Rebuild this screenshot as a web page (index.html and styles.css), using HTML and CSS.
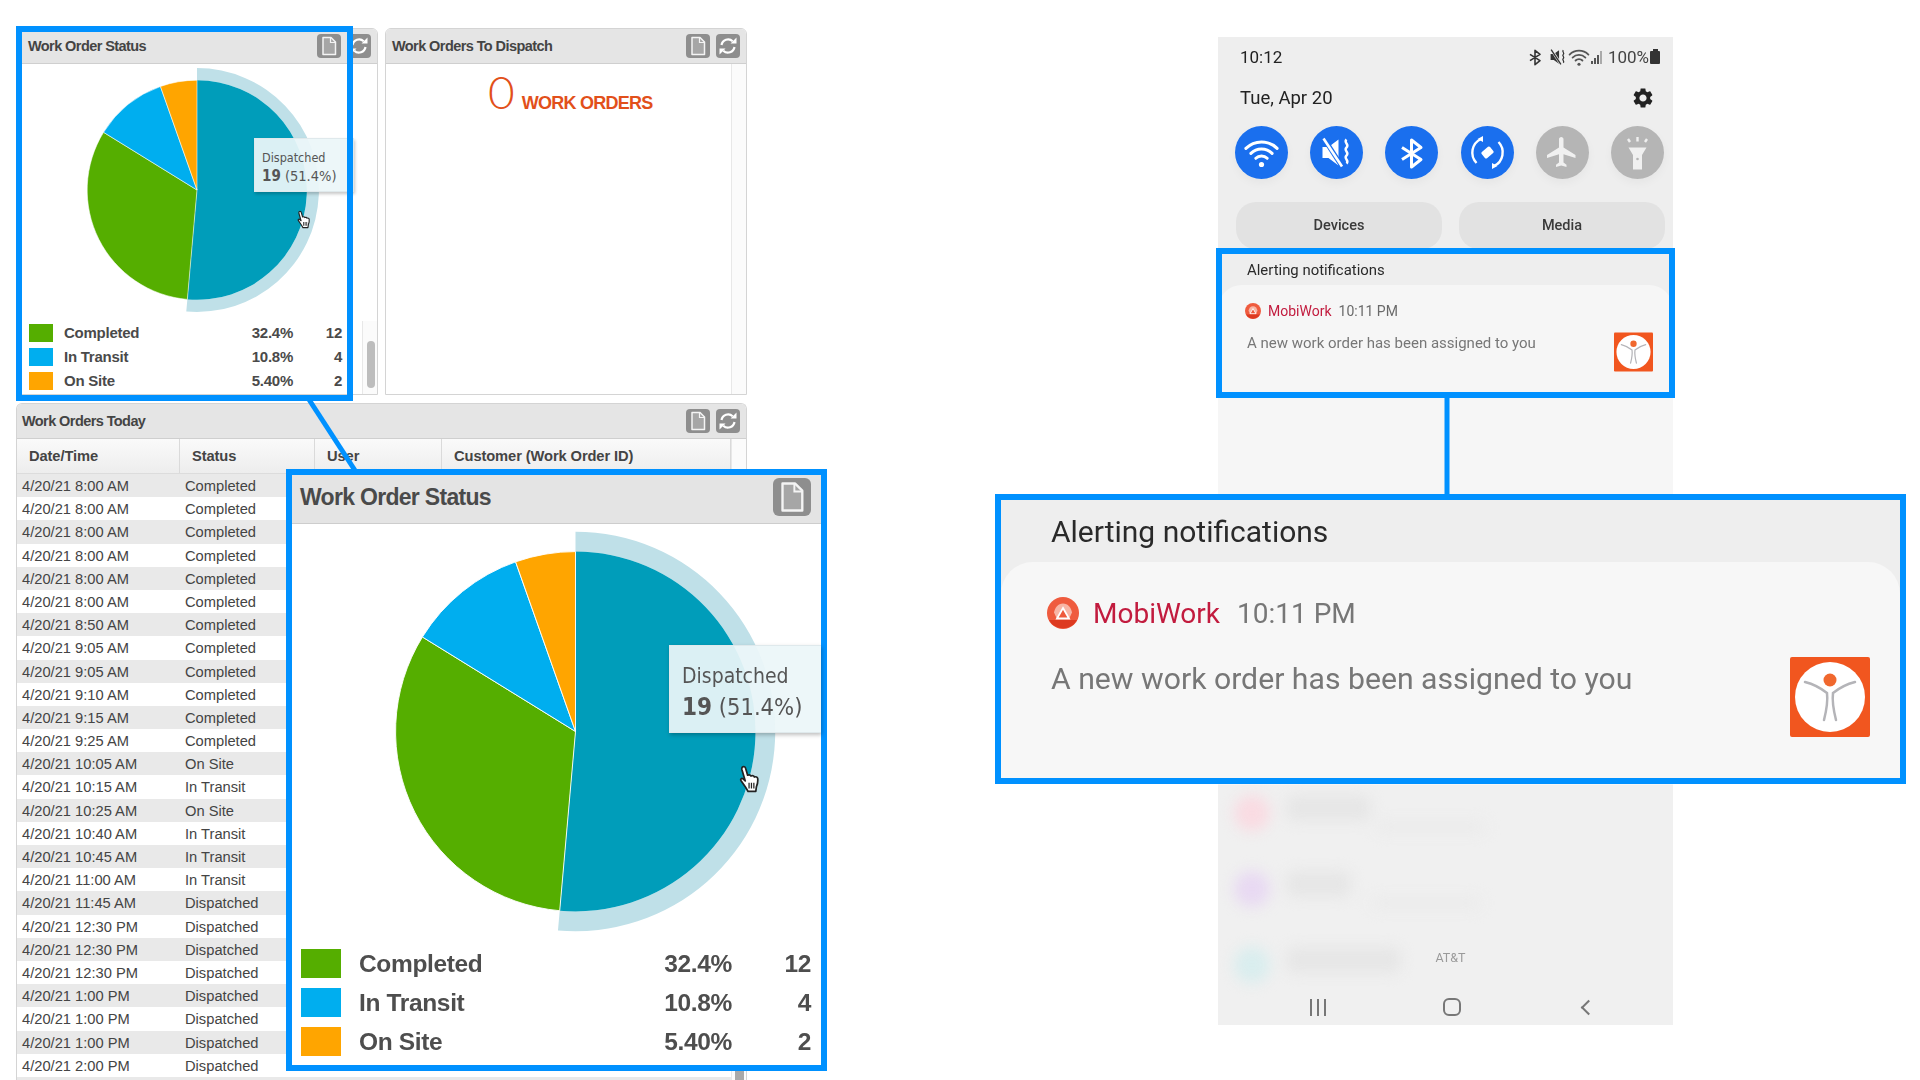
FILE: index.html
```html
<!DOCTYPE html>
<html lang="en">
<head>
<meta charset="utf-8">
<title>Work Order Status and MobiWork notification</title>
<link rel="stylesheet" href="styles.css">
</head>
<body>
<svg class="defs" aria-hidden="true">
  <symbol id="pie" viewBox="-112 -112 224 224">
    <path fill="#bfe0e8" d="M0 -111A111 111 0 1 1 -9.75 110.57L-8.78 99.61A100 100 0 1 0 0 -100Z"/>
    <path fill="#009dba" d="M0 0L0 -100A100 100 0 1 1 -8.78 99.61Z"/>
    <path fill="#55ae00" stroke="#fff" stroke-width=".5" d="M0 0L-8.78 99.61A100 100 0 0 1 -85.09 -52.53Z"/>
    <path fill="#00aeef" stroke="#fff" stroke-width=".5" d="M0 0L-85.09 -52.53A100 100 0 0 1 -33.29 -94.3Z"/>
    <path fill="#ffa500" stroke="#fff" stroke-width=".5" d="M0 0L-33.29 -94.3A100 100 0 0 1 0 -100Z"/>
  </symbol>
  <symbol id="doc" viewBox="0 0 24 24">
    <path fill="#a6a6a6" stroke="#f4f4f4" stroke-width="1.5" stroke-linejoin="round" d="M6 3.5h8l4.500 4.500v12.500h-12.500z"/>
    <path fill="none" stroke="#f4f4f4" stroke-width="1.200" d="M13.500 3.500v5h5"/>
  </symbol>
  <symbol id="refresh" viewBox="0 0 24 24">
    <g fill="none" stroke="#fff" stroke-width="2.200">
      <path d="M5.500 11a6.700 6.700 0 0 1 11.200-3.800"/>
      <path d="M18.500 13a6.700 6.700 0 0 1-11.200 3.800"/>
    </g>
    <path fill="#fff" d="M14.500 9.500h6v-6zM9.500 14.500h-6v6z"/>
  </symbol>
  <symbol id="hand" viewBox="0 0 24 30">
    <path fill="#fff" stroke="#222" stroke-width="1.800" stroke-linejoin="round" d="M3.500 2.500c1.500-1 3-.2 3.400 1.300L9 11c2-.7 3-.3 3.500.9 1.500-.7 3-.3 3.500 1 1.600-.6 3.200 0 3.500 1.500.4 3-.2 6-1.300 8.600L17.500 28H9.500L6.500 23 2 16.500c-.7-1.300.7-2.700 2-1.800L6.500 17 3 5c-.2-1 0-2 .5-2.500z"/>
    <path fill="none" stroke="#222" stroke-width="1.300" d="M10.500 19v6M13 19v6M15.500 19v6"/>
  </symbol>
  <symbol id="gear" viewBox="0 0 24 24">
    <path fill="currentColor" d="M19.140 12.940c.04-.3.06-.61.06-.94 0-.32-.02-.64-.07-.94l2.030-1.580c.18-.14.23-.41.12-.61l-1.920-3.320c-.12-.22-.37-.29-.59-.22l-2.390.96c-.5-.38-1.030-.7-1.620-.94l-.36-2.540c-.04-.24-.24-.41-.48-.41h-3.840c-.24 0-.43.17-.47.41l-.36 2.540c-.59.24-1.130.57-1.620.94l-2.390-.96c-.22-.08-.47 0-.59.22L2.740 8.870c-.12.21-.08.47.12.61l2.030 1.580c-.05.3-.09.63-.09.94s.02.64.07.94l-2.030 1.580c-.18.14-.23.41-.12.61l1.920 3.320c.12.22.37.29.59.22l2.390-.96c.5.38 1.030.7 1.620.94l.36 2.540c.05.24.24.41.48.41h3.840c.24 0 .44-.17.47-.41l.36-2.540c.59-.24 1.130-.56 1.620-.94l2.390.96c.22.08.47 0 .59-.22l1.920-3.320c.12-.22.07-.47-.12-.61l-2.010-1.580zM12 15.600c-1.980 0-3.600-1.620-3.600-3.600s1.620-3.600 3.600-3.600 3.600 1.620 3.600 3.600-1.620 3.600-3.600 3.600z"/>
  </symbol>
  <symbol id="wifi" viewBox="0 0 53 53">
    <g fill="none" stroke="currentColor" stroke-width="3" stroke-linecap="round">
      <path d="M10.900 22.400a22 22 0 0 1 31.200 0"/>
      <path d="M15.900 27.400a15 15 0 0 1 21.200 0"/>
      <path d="M20.800 32.300a8 8 0 0 1 11.400 0"/>
    </g>
    <circle cx="26.500" cy="38.500" r="2.600" fill="currentColor"/>
  </symbol>
  <symbol id="mute" viewBox="0 0 53 53">
    <path fill="currentColor" d="M12.500 21h6l10-7.500v26l-10-7.500h-6z"/>
    <path class="mute-gap" fill="none" stroke-width="5" d="M12 9.500l20 31"/>
    <path fill="none" stroke="currentColor" stroke-width="2.600" d="M13.500 12.500l18.500 28"/>
    <path fill="none" stroke="currentColor" stroke-width="2.400" d="M36.500 13.500c-3.500 3 3.500 5 0 8s3.500 5 0 8 3.500 5 0 8"/>
  </symbol>
  <symbol id="bt" viewBox="0 0 53 53">
    <path fill="none" stroke="currentColor" stroke-width="3" stroke-linejoin="round" d="M17 21.500L36 33.500 26.500 41V14L36 21.500 17 33.500"/>
  </symbol>
  <symbol id="rotate" viewBox="0 0 53 53">
    <g fill="none" stroke="#fff" stroke-width="2.400">
      <path d="M20 13a15 15 0 0 0-4.500 24"/>
      <path d="M33 40a15 15 0 0 0 4.500-24"/>
    </g>
    <path fill="#fff" d="M16.500 13l5.500-3v6zM36.500 40l-5.500 3v-6z"/>
    <rect x="21" y="22.500" width="11" height="8" rx="1.500" fill="#fff" transform="rotate(-40 26.500 26.500)"/>
  </symbol>
  <symbol id="plane" viewBox="0 0 24 24">
    <path fill="currentColor" d="M21 16v-2l-8-5V3.500c0-.83-.67-1.500-1.500-1.500S10 2.670 10 3.500V9l-8 5v2l8-2.500V19l-2 1.500V22l3.500-1 3.500 1v-1.500L13 19v-5.500l8 2.500z"/>
  </symbol>
  <symbol id="torch" viewBox="0 0 53 53">
    <path fill="currentColor" d="M17.500 21.500h18l-4.500 7.500v14.500h-9V29z"/>
    <circle cx="26.500" cy="33" r="1.300" fill="#b5b5b5"/>
    <path fill="none" stroke="currentColor" stroke-width="2.400" d="M26.500 11v4.500M17 13l2 3M36 13l-2 3"/>
  </symbol>
  <symbol id="mobi" viewBox="0 0 32 32">
    <circle cx="16" cy="16" r="16" fill="#ef5b3e"/>
    <path fill="#fbd3c8" d="M16 6.500c5 0 8 4 9 9l-3 6.500H10l-3-6.500c1-5 4-9 9-9z" opacity=".75"/>
    <path fill="#ee5a3c" stroke="#fff" stroke-width="1.800" d="M16 11l6 10.500H10z"/>
    <path fill="#dd3a20" d="M2 23h28a16 16 0 0 1-28 0z"/>
  </symbol>
  <symbol id="thumb" viewBox="0 0 80 80">
    <rect width="80" height="80" rx="2" fill="#f1561f"/>
    <circle cx="40" cy="40" r="35" fill="#fff"/>
    <circle cx="40" cy="23" r="6.500" fill="#f0682e"/>
    <path fill="none" stroke="#b4b4b8" stroke-width="2.500" stroke-linecap="round" d="M15 25c8 2 17 7 22 11 1 8-1 19-3 27M65 25c-8 2-17 7-22 11-1 8 1 19 3 27"/>
  </symbol>
</svg>

<main class="page">
  <section class="dash">
    <div class="top-row">
      <article class="panel panel-top">
        <header class="panel-head">
          <h2 class="panel-title title-status">Work Order Status</h2>
          <span class="tool"><svg class="tool-icon"><use href="#doc"/></svg></span>
          <span class="tool"><svg class="tool-icon"><use href="#refresh"/></svg></span>
        </header>
        <div class="chart">
          <svg class="pie"><use href="#pie"/></svg>
          <svg class="hand"><use href="#hand"/></svg>
          <div class="tip">
            <div>Dispatched</div>
            <div class="tip-value"><b>19</b> (51.4%)</div>
          </div>
        </div>
        <ul class="legend">
          <li class="leg-row"><i class="swatch sw-green"></i><span class="leg-name">Completed</span><span>32.4%</span><span class="leg-count">12</span></li>
          <li class="leg-row"><i class="swatch sw-blue"></i><span class="leg-name">In Transit</span><span>10.8%</span><span class="leg-count">4</span></li>
          <li class="leg-row"><i class="swatch sw-orange"></i><span class="leg-name">On Site</span><span>5.40%</span><span class="leg-count">2</span></li>
        </ul>
        <div class="mini-scroll"><i class="mini-thumb"></i></div>
      </article>

      <article class="panel panel-top">
        <header class="panel-head">
          <h2 class="panel-title title-dispatch">Work Orders To Dispatch</h2>
          <span class="tool"><svg class="tool-icon"><use href="#doc"/></svg></span>
          <span class="tool"><svg class="tool-icon"><use href="#refresh"/></svg></span>
        </header>
        <div class="dispatch-body">
          <div class="dispatch-count"><span class="zero">0</span><span class="wo">WORK ORDERS</span></div>
          <div class="track"></div>
        </div>
      </article>
    </div>

    <article class="panel panel-table">
      <header class="panel-head">
        <h2 class="panel-title title-today">Work Orders Today</h2>
        <span class="tool"><svg class="tool-icon"><use href="#doc"/></svg></span>
        <span class="tool"><svg class="tool-icon"><use href="#refresh"/></svg></span>
      </header>
      <div class="table-wrap">
        <div class="table">
          <div class="thead">
            <span>Date/Time</span><span>Status</span><span>User</span><span>Customer (Work Order ID)</span>
          </div>
          <div class="tr"><span>4/20/21 8:00 AM</span><span>Completed</span></div>
          <div class="tr"><span>4/20/21 8:00 AM</span><span>Completed</span></div>
          <div class="tr"><span>4/20/21 8:00 AM</span><span>Completed</span></div>
          <div class="tr"><span>4/20/21 8:00 AM</span><span>Completed</span></div>
          <div class="tr"><span>4/20/21 8:00 AM</span><span>Completed</span></div>
          <div class="tr"><span>4/20/21 8:00 AM</span><span>Completed</span></div>
          <div class="tr"><span>4/20/21 8:50 AM</span><span>Completed</span></div>
          <div class="tr"><span>4/20/21 9:05 AM</span><span>Completed</span></div>
          <div class="tr"><span>4/20/21 9:05 AM</span><span>Completed</span></div>
          <div class="tr"><span>4/20/21 9:10 AM</span><span>Completed</span></div>
          <div class="tr"><span>4/20/21 9:15 AM</span><span>Completed</span></div>
          <div class="tr"><span>4/20/21 9:25 AM</span><span>Completed</span></div>
          <div class="tr"><span>4/20/21 10:05 AM</span><span>On Site</span></div>
          <div class="tr"><span>4/20/21 10:15 AM</span><span>In Transit</span></div>
          <div class="tr"><span>4/20/21 10:25 AM</span><span>On Site</span></div>
          <div class="tr"><span>4/20/21 10:40 AM</span><span>In Transit</span></div>
          <div class="tr"><span>4/20/21 10:45 AM</span><span>In Transit</span></div>
          <div class="tr"><span>4/20/21 11:00 AM</span><span>In Transit</span></div>
          <div class="tr"><span>4/20/21 11:45 AM</span><span>Dispatched</span></div>
          <div class="tr"><span>4/20/21 12:30 PM</span><span>Dispatched</span></div>
          <div class="tr"><span>4/20/21 12:30 PM</span><span>Dispatched</span></div>
          <div class="tr"><span>4/20/21 12:30 PM</span><span>Dispatched</span></div>
          <div class="tr"><span>4/20/21 1:00 PM</span><span>Dispatched</span></div>
          <div class="tr"><span>4/20/21 1:00 PM</span><span>Dispatched</span></div>
          <div class="tr"><span>4/20/21 1:00 PM</span><span>Dispatched</span></div>
          <div class="tr"><span>4/20/21 2:00 PM</span><span>Dispatched</span></div>
          <div class="tr"></div>
        </div>
        <div class="track track-table"><i class="track-thumb"></i></div>
      </div>
    </article>
  </section>

  <section class="phone">
    <div class="status soft">
      <span class="clock">10:12</span>
      <span class="status-right">
        <svg class="st-bt"><use href="#bt"/></svg>
        <svg class="st-mute"><use href="#mute"/></svg>
        <svg class="st-wifi"><use href="#wifi"/></svg>
        <span class="st-bars"><i class="bar b1"></i><i class="bar b2"></i><i class="bar b3"></i><i class="bar b4"></i></span>
        <span class="pct">100%</span>
        <i class="battery"></i>
      </span>
    </div>
    <div class="dateline soft">
      <span class="date">Tue, Apr 20</span>
      <svg class="gear"><use href="#gear"/></svg>
    </div>
    <div class="toggles soft">
      <span class="tog on"><svg class="tog-icon"><use href="#wifi"/></svg></span>
      <span class="tog on"><svg class="tog-icon"><use href="#mute"/></svg></span>
      <span class="tog on"><svg class="tog-icon"><use href="#bt"/></svg></span>
      <span class="tog on"><svg class="tog-icon"><use href="#rotate"/></svg></span>
      <span class="tog off"><svg class="plane"><use href="#plane"/></svg></span>
      <span class="tog off"><svg class="tog-icon"><use href="#torch"/></svg></span>
    </div>
    <div class="pills soft">
      <span class="pill">Devices</span>
      <span class="pill">Media</span>
    </div>
    <div class="alert-head soft">Alerting notifications</div>
    <div class="notif soft">
      <div class="notif-main">
        <div class="notif-app">
          <svg class="mobi"><use href="#mobi"/></svg>
          <span class="app-name">MobiWork</span>
          <span class="app-time">10:11 PM</span>
        </div>
        <p class="notif-body">A new work order has been assigned to you</p>
      </div>
      <svg class="thumb"><use href="#thumb"/></svg>
    </div>
    <div class="lower">
      <div class="blur-list">
        <div class="blur-row"><i class="dot dot-pink"></i><div class="blobs"><i class="blob blob-a"></i><i class="blob blob-b"></i></div></div>
        <div class="blur-row"><i class="dot dot-purple"></i><div class="blobs"><i class="blob blob-c"></i><i class="blob blob-d"></i></div></div>
        <div class="blur-row"><i class="dot dot-teal"></i><div class="blobs"><i class="blob blob-e"></i></div></div>
      </div>
      <span class="carrier soft">AT&amp;T</span>
      <nav class="navbar soft">
        <span class="nav-recent"><i></i><i></i><i></i></span>
        <span class="nav-home"></span>
        <span class="nav-back"></span>
      </nav>
    </div>
  </section>

  <svg class="connectors" aria-hidden="true">
    <path d="M308 398L356 472"/>
    <path d="M1447 396V496"/>
  </svg>

  <div class="frame frame-status"></div>
  <div class="frame frame-alert"></div>

  <aside class="callout callout-status">
    <div class="co-inner soft">
      <header class="co-head">
        <h2 class="co-title">Work Order Status</h2>
        <span class="co-tool"><svg class="co-tool-icon"><use href="#doc"/></svg></span>
      </header>
      <div class="co-chart">
        <svg class="co-pie"><use href="#pie"/></svg>
        <svg class="co-hand"><use href="#hand"/></svg>
      </div>
      <div class="co-tip">
        <div>Dispatched</div>
        <div class="co-tip-value"><b>19</b> (51.4%)</div>
      </div>
      <ul class="co-legend">
        <li class="co-row"><i class="co-swatch sw-green"></i><span class="leg-name">Completed</span><span>32.4%</span><span class="co-count">12</span></li>
        <li class="co-row"><i class="co-swatch sw-blue"></i><span class="leg-name">In Transit</span><span>10.8%</span><span class="co-count">4</span></li>
        <li class="co-row"><i class="co-swatch sw-orange"></i><span class="leg-name">On Site</span><span>5.40%</span><span class="co-count">2</span></li>
      </ul>
    </div>
  </aside>

  <aside class="callout callout-alert">
    <div class="ca-head soft">Alerting notifications</div>
    <div class="ca-card soft">
      <div class="ca-main">
        <div class="ca-app">
          <svg class="ca-mobi"><use href="#mobi"/></svg>
          <span class="ca-name">MobiWork</span>
          <span class="ca-time">10:11 PM</span>
        </div>
        <p class="ca-body">A new work order has been assigned to you</p>
      </div>
      <svg class="ca-thumb"><use href="#thumb"/></svg>
    </div>
  </aside>
</main>
</body>
</html>
```

FILE: styles.css
```css
* { box-sizing: border-box; }
html, body { margin: 0; padding: 0; background: #fff; }
h2, p, ul { margin: 0; padding: 0; }
ul { list-style: none; }
i { display: block; }
.defs { position: absolute; width: 0; height: 0; }
.soft { filter: blur(.35px); }
.mute-gap { stroke: var(--gap); }

.page {
  position: relative;
  display: flex;
  width: 1920px;
  height: 1080px;
  overflow: hidden;
  font-family: "Liberation Sans", Arial, sans-serif;
  color: #444;
}

/* dashboard */
.dash {
  width: 731px;
  margin-left: 16px;
  padding-top: 28px;
  display: flex;
  flex-direction: column;
  gap: 8px;
  flex: none;
}
.top-row { display: flex; gap: 7px; }
.panel {
  position: relative;
  background: #fff;
  border: 1px solid #d4d4d4;
  border-radius: 6px 6px 0 0;
  display: flex;
  flex-direction: column;
}
.panel-top { flex: 1; height: 367px; }
.panel-table { flex: 1; min-height: 0; border-bottom: 0; }
.panel-head {
  height: 35px;
  flex: none;
  display: flex;
  align-items: center;
  gap: 6px;
  padding-right: 6px;
  background: #e5e5e5;
  border-bottom: 1px solid #cfcfcf;
  border-radius: 5px 5px 0 0;
}
.panel-title {
  flex: 1;
  font-size: 14.5px;
  font-weight: 700;
  letter-spacing: -.58px;
  color: #444;
}
.title-status { padding-left: 11px; }
.title-dispatch { padding-left: 6px; }
.title-today { padding-left: 5px; }
.tool {
  width: 24px;
  height: 24px;
  border-radius: 4px;
  background: #8e8e8e;
  flex: none;
}
.tool-icon { display: block; width: 24px; height: 24px; }

.chart { position: relative; height: 259.5px; padding: 3px 0 0 57px; flex: none; }
.pie { display: block; width: 246px; height: 246px; }
.hand { position: absolute; left: 280px; top: 146px; width: 15px; height: 19px; }
.tip {
  position: absolute;
  left: 237px;
  top: 74px;
  width: 100px;
  height: 54px;
  padding: 10px 0 0 7px;
  background: rgba(236, 246, 249, .93);
  border: 1px solid #dfe9ec;
  box-shadow: 1px 2px 3px rgba(0, 0, 0, .22);
  font: 12.5px/18px "DejaVu Sans Condensed", "DejaVu Sans", sans-serif;
  font-stretch: condensed;
  color: #555;
}
.tip-value { font-size: 14.5px; }
.tip b { font-size: 15px; }

.legend { padding: 0 35px 0 12px; }
.leg-row {
  display: flex;
  align-items: center;
  height: 18px;
  margin-bottom: 6px;
  font-size: 15px;
  font-weight: 700;
  letter-spacing: -.25px;
  color: #4a4a4a;
}
.swatch { width: 24px; height: 18px; margin-right: 11px; flex: none; }
.sw-green { background: #55ae00; }
.sw-blue { background: #00aeef; }
.sw-orange { background: #ffa500; }
.leg-name { flex: 1; }
.leg-count { width: 49px; text-align: right; }

.mini-scroll {
  position: absolute;
  right: 0;
  bottom: 0;
  width: 15px;
  height: 73px;
  padding: 20px 2px 6px 4px;
  background: #fbfbfb;
  border-left: 1px solid #e8e8e8;
}
.mini-thumb { height: 100%; border-radius: 4px; background: #bdbdbd; }

.dispatch-body { flex: 1; display: flex; min-height: 0; }
.dispatch-count {
  flex: 1;
  display: flex;
  align-items: baseline;
  height: 55px;
  padding-left: 102px;
  color: #e2501a;
}
.zero { font: 300 46px/55px Lato, sans-serif; margin-right: 7px; }
.wo { font-size: 18px; font-weight: 700; letter-spacing: -.75px; }
.track { width: 15px; flex: none; background: #fbfbfb; border-left: 1px solid #e8e8e8; }

.table-wrap { flex: 1; display: flex; min-height: 0; overflow: hidden; }
.table { flex: 1; min-width: 0; }
.thead, .tr {
  display: grid;
  grid-template-columns: 163px 135px 127px 1fr;
}
.thead {
  height: 35px;
  align-items: center;
  font-size: 14.7px;
  font-weight: 700;
  letter-spacing: -.1px;
  background: linear-gradient(#fafafa, #ededed);
  border-bottom: 1px solid #dcdcdc;
}
.thead span {
  padding-left: 12px;
  height: 100%;
  line-height: 34px;
  border-right: 1px solid #dadada;
}
.tr {
  height: 23.2px;
  padding-top: 1px;
  line-height: 23.2px;
  font-size: 14.7px;
  color: #444;
}
.tr:nth-child(even) { background: #e9e9e9; }
.tr span { padding-left: 5px; }
.track-table { position: relative; display: flex; flex-direction: column; justify-content: flex-end; padding: 0 2px 0 3px; }
.track-thumb { height: 60px; background: #a9a9a9; }

/* phone */
.phone {
  width: 455px;
  height: 988px;
  margin: 37px 0 0 471px;
  flex: none;
  display: flex;
  flex-direction: column;
  background: #eeeeee;
  font-family: Roboto, "Noto Sans", sans-serif;
  color: #222;
}
.status {
  height: 40px;
  flex: none;
  display: flex;
  align-items: center;
  justify-content: space-between;
  padding: 0 13px 0 22px;
}
.clock { font-size: 17px; }
.status-right { display: flex; align-items: center; color: #333; }
.st-bt { width: 28px; height: 28px; margin-right: -5px; }
.st-mute { width: 28px; height: 28px; margin-right: -5px; --gap: #eeeeee; }
.st-wifi { width: 32px; height: 32px; margin: 0 -5px 0 -4px; color: #555; }
.st-bars { display: flex; align-items: flex-end; gap: 1px; height: 13px; margin: 0 6px 0 1px; }
.bar { width: 2px; background: #555; }
.b1 { height: 3px; }
.b2 { height: 6px; }
.b3 { height: 9px; }
.b4 { height: 13px; background: #aaa; }
.pct { font-size: 17px; color: #444; }
.battery { position: relative; width: 10px; height: 13px; margin-left: 1px; background: #333; border-radius: 1px; }
.battery::before {
  content: "";
  position: absolute;
  left: 2.500px;
  top: -2px;
  width: 5px;
  height: 2px;
  background: #333;
}
.dateline {
  height: 42px;
  flex: none;
  display: flex;
  align-items: center;
  justify-content: space-between;
  padding: 0 18px 0 22px;
}
.date { font-size: 18.500px; }
.gear { width: 24px; height: 24px; color: #222; }
.toggles {
  display: flex;
  gap: 22.2px;
  margin-top: 6.5px;
  padding-left: 17px;
  flex: none;
}
.tog {
  width: 53px;
  height: 53px;
  border-radius: 50%;
  display: flex;
  align-items: center;
  justify-content: center;
  flex: none;
  box-shadow: 0 4px 10px rgba(0, 0, 0, .04);
}
.on { background: #1a6fee; color: #fff; --gap: #1a6fee; }
.off { background: #b5b5b5; color: #f0f0f0; }
.tog-icon { width: 53px; height: 53px; }
.plane { width: 36px; height: 36px; }
.pills { display: flex; gap: 17px; margin-top: 23.5px; padding: 0 8px 0 18px; flex: none; height: 46px; }
.pill {
  flex: 1;
  height: 47px;
  padding-top: 15px;
  border-radius: 20px;
  background: #e2e2e2;
  text-align: center;
  font-size: 14.500px;
  font-weight: 500;
  color: #3a3a3a;
}
.alert-head {
  height: 37px;
  flex: none;
  padding: 13px 0 0 29px;
  font-size: 14.900px;
  line-height: 18px;
  color: #2a2a2a;
}
.notif {
  height: 500px;
  flex: none;
  display: flex;
  justify-content: space-between;
  align-items: flex-start;
  padding: 18px 20px 0 27px;
  border-radius: 24px 24px 0 0;
  background: #f6f6f6;
}
.notif-app { display: flex; align-items: center; height: 16px; font-size: 14px; }
.mobi { width: 16px; height: 16px; margin-right: 7px; }
.app-name { color: #c21b3e; margin-right: 7px; }
.app-time { color: #6a6a6a; }
.notif-body { margin: 16px 0 0 2px; font-size: 15px; line-height: 17px; color: #777; }
.thumb { width: 39px; height: 40px; margin-top: 29px; }

.lower { position: relative; flex: 1; display: flex; flex-direction: column; min-height: 0; background: #f0f0f0; }
.blur-list { flex: 1; min-height: 0; padding: 10px 0 0 16px; filter: blur(7px); }
.blur-row { display: flex; align-items: flex-start; gap: 16px; height: 76px; }
.dot { width: 36px; height: 36px; border-radius: 50%; flex: none; margin-top: 0; }
.dot-pink { background: #f9dbe2; }
.dot-purple { background: #e8d9f2; }
.dot-teal { background: #d9edee; }
.blob { background: #e6e6e6; height: 26px; border-radius: 8px; }
.blob-a { width: 85px; }
.blob-b { width: 110px; height: 12px; margin: 0 0 0 90px; background: #ebebeb; }
.blob-c { width: 65px; }
.blob-d { width: 110px; height: 12px; margin: 0 0 0 85px; background: #ebebeb; }
.blob-e { width: 115px; }
.carrier {
  position: absolute;
  left: 0;
  right: 0;
  top: 165px;
  padding-left: 10px;
  text-align: center;
  font-size: 12.500px;
  color: #9a9a9a;
}
.navbar {
  height: 36px;
  flex: none;
  display: flex;
  align-items: center;
  padding-left: 92px;
}
.nav-recent { display: flex; gap: 5px; width: 133px; }
.nav-recent i { width: 2px; height: 17px; background: #777; }
.nav-home { width: 18px; height: 18px; border: 2px solid #777; border-radius: 6px; margin-right: 122px; }
.nav-back {
  width: 11px;
  height: 11px;
  border-left: 2px solid #777;
  border-bottom: 2px solid #777;
  transform: rotate(45deg);
}

/* overlays */
.connectors {
  position: absolute;
  left: 0;
  top: 0;
  width: 1920px;
  height: 1080px;
  fill: none;
  stroke: #0091ff;
  stroke-width: 5;
}
.frame { position: absolute; border: 6px solid #0091ff; }
.frame-status { left: 16px; top: 26px; width: 337px; height: 375px; }
.frame-alert { left: 1216px; top: 248px; width: 459px; height: 150px; }

.callout { position: absolute; border: 6px solid #0091ff; display: flex; flex-direction: column; }
.callout-status { left: 286px; top: 469px; width: 541px; height: 602px; background: #fff; }
.co-inner { position: relative; height: 100%; }
.co-head {
  display: flex;
  align-items: center;
  height: 49px;
  padding: 0 10px 4px 0;
  background: #e4e4e4;
  border-bottom: 1px solid #cdcdcd;
}
.co-title {
  flex: 1;
  padding-left: 8px;
  font-size: 23px;
  font-weight: 700;
  letter-spacing: -.7px;
  color: #4a4a4a;
}
.co-tool { width: 38px; height: 38px; border-radius: 6px; background: #8e8e8e; }
.co-tool-icon { display: block; width: 38px; height: 38px; }
.co-chart { position: relative; height: 425px; padding: 5.5px 0 0 82px; }
.co-pie { display: block; width: 403px; height: 403px; }
.co-hand { position: absolute; left: 447px; top: 240px; width: 23px; height: 30px; }
.co-tip {
  position: absolute;
  left: 377px;
  right: 0;
  top: 170px;
  height: 88px;
  padding: 15px 0 0 12px;
  background: rgba(236, 246, 249, .93);
  border: 1px solid #dfe9ec;
  border-right: 0;
  box-shadow: 1px 2px 4px rgba(0, 0, 0, .25);
  font: 21px/31px "DejaVu Sans Condensed", "DejaVu Sans", sans-serif;
  font-stretch: condensed;
  color: #555;
}
.co-tip-value { font-size: 23.5px; }
.co-tip b { font-size: 24px; }
.co-legend { padding: 0 10px 0 9px; }
.co-row {
  display: flex;
  align-items: center;
  height: 29px;
  margin-bottom: 10px;
  font-size: 24.5px;
  font-weight: 700;
  letter-spacing: -.35px;
  color: #4e4e4e;
}
.co-swatch { width: 40px; height: 29px; margin-right: 18px; flex: none; }
.co-count { width: 79px; text-align: right; }

.callout-alert {
  left: 995px;
  top: 494px;
  width: 911px;
  height: 290px;
  background: #eeeeee;
  font-family: Roboto, "Noto Sans", sans-serif;
}
.ca-head {
  height: 62px;
  flex: none;
  padding-left: 50px;
  font-size: 30px;
  line-height: 64px;
  color: #2a2a2a;
}
.ca-card {
  flex: 1;
  display: flex;
  justify-content: space-between;
  align-items: flex-start;
  padding: 35px 30px 0 46px;
  border-radius: 32px 32px 0 0;
  background: #f7f7f7;
}
.ca-app { display: flex; align-items: center; height: 32px; font-size: 28px; }
.ca-mobi { width: 32px; height: 32px; margin-right: 14px; }
.ca-name { color: #c21b3e; margin-right: 17px; }
.ca-time { color: #777; }
.ca-body { margin: 32px 0 0 4px; font-size: 30.2px; line-height: 36px; color: #777; }
.ca-thumb { width: 80px; height: 80px; margin-top: 60px; }
```
